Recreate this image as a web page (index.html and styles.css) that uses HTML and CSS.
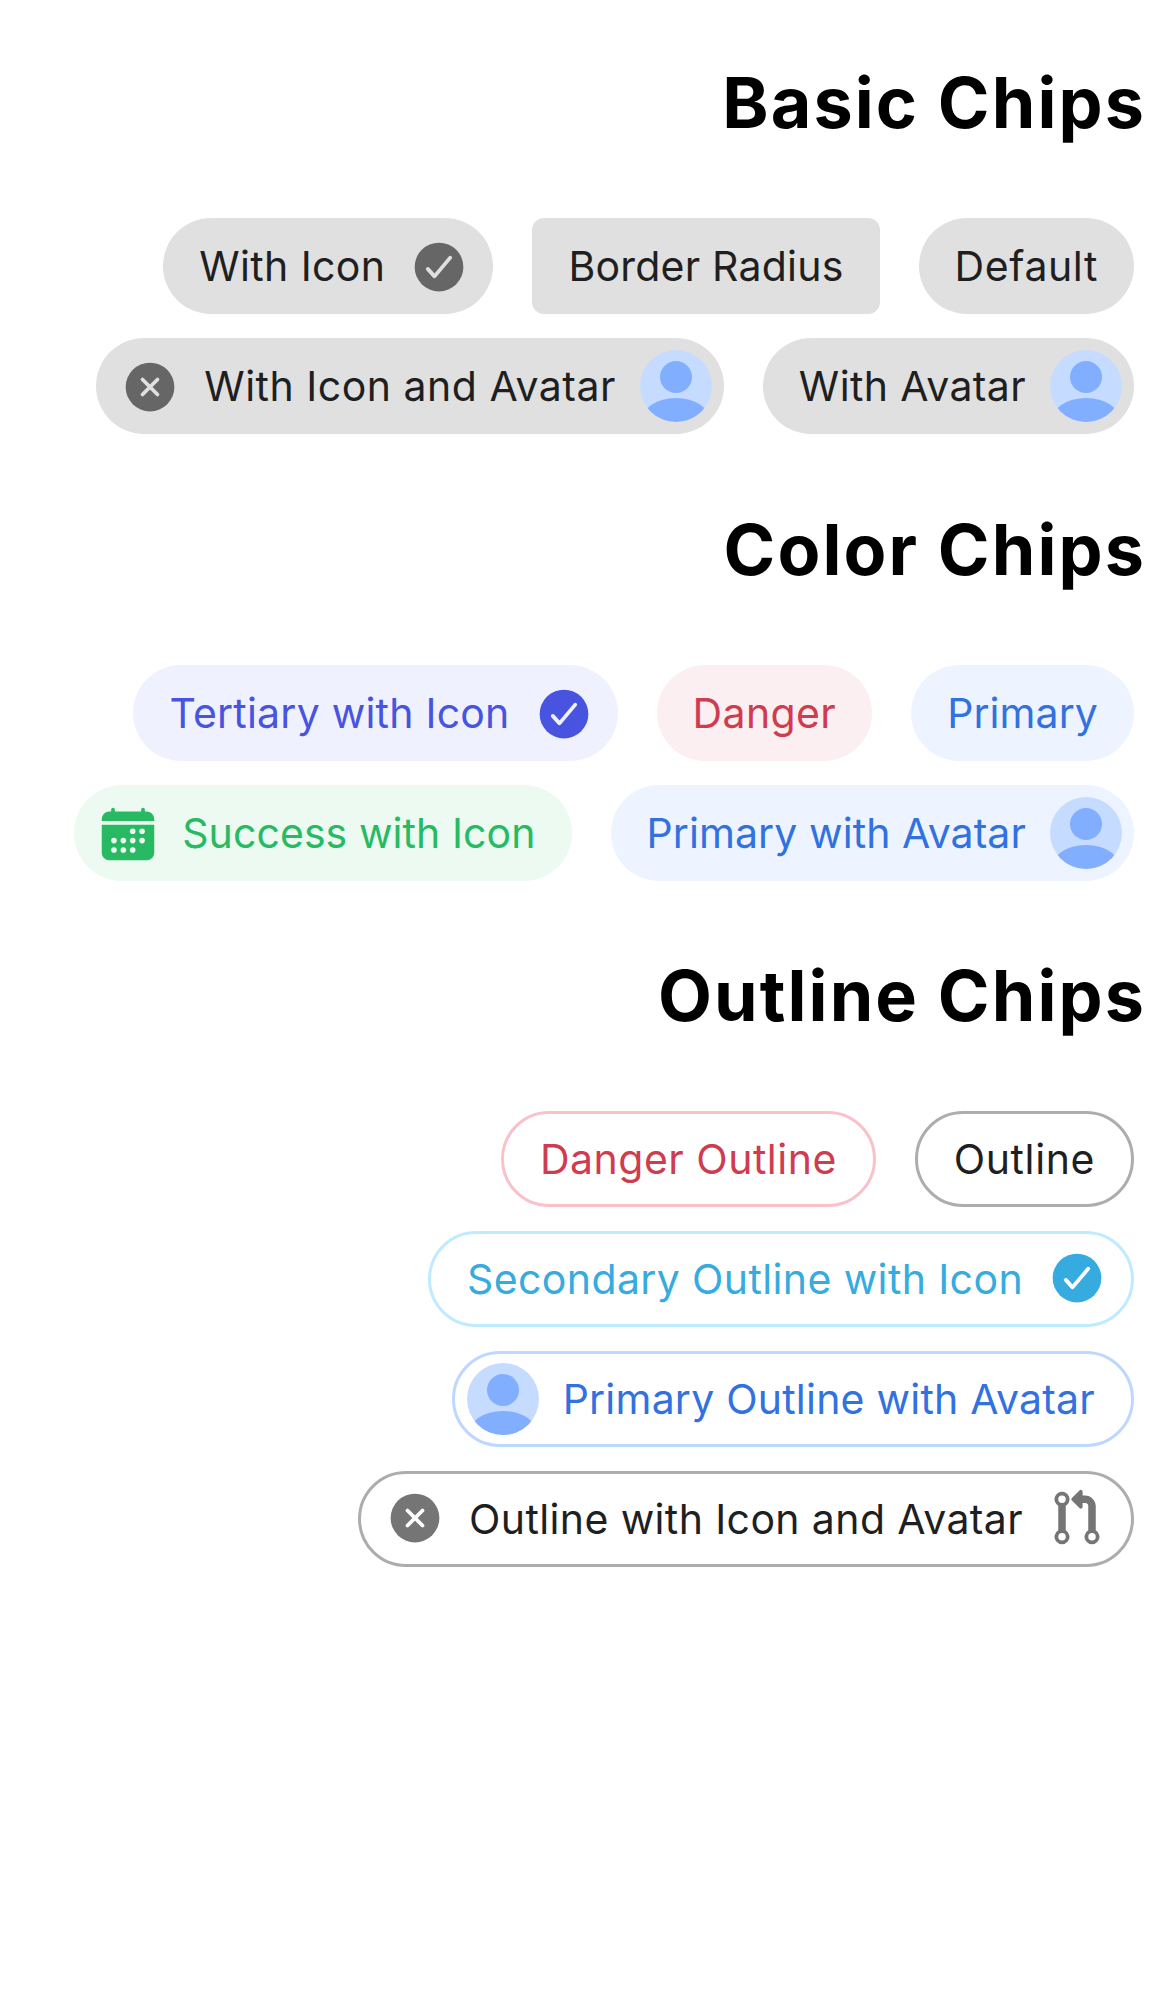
FILE: index.html
```html
<!DOCTYPE html>
<html lang="en" dir="rtl">
<head>
<meta charset="utf-8">
<title>Chips</title>
<link rel="stylesheet" href="styles.css">
</head>
<body>
<svg class="sprite" aria-hidden="true">
  <defs>
    <symbol id="check" viewBox="0 0 512 512">
      <mask id="check-cut"><rect width="512" height="512" fill="#fff"/><path d="M352 176 217.6 336 160 272" fill="none" stroke="#000" stroke-width="32" stroke-linecap="round" stroke-linejoin="round"/></mask>
      <circle cx="256" cy="256" r="208" fill="currentColor" mask="url(#check-cut)"/>
    </symbol>
    <symbol id="close" viewBox="0 0 512 512">
      <mask id="close-cut"><rect width="512" height="512" fill="#fff"/><path d="M320 320 192 192M320 192 192 320" fill="none" stroke="#000" stroke-width="32" stroke-linecap="round"/></mask>
      <circle cx="256" cy="256" r="208" fill="currentColor" mask="url(#close-cut)"/>
    </symbol>
    <symbol id="calendar" viewBox="0 0 512 512">
      <mask id="calendar-cut"><rect width="512" height="512" fill="#fff"/><circle cx="296" cy="232" r="24"/><circle cx="376" cy="232" r="24"/><circle cx="136" cy="312" r="24"/><circle cx="216" cy="312" r="24"/><circle cx="296" cy="312" r="24"/><circle cx="376" cy="312" r="24"/><circle cx="136" cy="392" r="24"/><circle cx="216" cy="392" r="24"/><circle cx="296" cy="392" r="24"/></mask>
      <path fill="currentColor" mask="url(#calendar-cut)" d="M480 128a64 64 0 0 0-64-64h-16V48a16 16 0 0 0-32 0v16H144V48a16 16 0 0 0-32 0v16H96a64 64 0 0 0-64 64v12a4 4 0 0 0 4 4h440a4 4 0 0 0 4-4zM32 416a64 64 0 0 0 64 64h320a64 64 0 0 0 64-64V179a3 3 0 0 0-3-3H35a3 3 0 0 0-3 3z"/>
    </symbol>
    <symbol id="pull-request" viewBox="0 0 512 512">
      <path fill="currentColor" fill-rule="evenodd" d="M192 96a64 64 0 1 0-96 55.39v209.22a64 64 0 1 0 64 0V151.39A64 64 0 0 0 192 96zM128 64a32 32 0 1 1 0 64 32 32 0 0 1 0-64zM128 448a32 32 0 1 1 0-64 32 32 0 0 1 0 64zM416 360.61V156a92.1 92.1 0 0 0-92-92h-20V32a16 16 0 0 0-27.31-11.31l-64 64a16 16 0 0 0 0 22.62l64 64A16 16 0 0 0 304 160v-32h20a28 28 0 0 1 28 28v204.61a64 64 0 1 0 64 0zM384 448a32 32 0 1 1 0-64 32 32 0 0 1 0 64z"/>
    </symbol>
    <symbol id="person" viewBox="0 0 72 72">
      <clipPath id="round"><circle cx="36" cy="36" r="36"/></clipPath>
      <g clip-path="url(#round)"><rect width="72" height="72" fill="#c5dbff"/><circle cx="36" cy="27" r="16" fill="#82aeff"/><ellipse cx="36" cy="72" rx="35" ry="24" fill="#82aeff"/></g>
    </symbol>
  </defs>
</svg>

<main class="page">
  <section class="group">
    <h1 class="title">Basic Chips</h1>
    <div class="row">
      <div class="chip"><span class="label">Default</span></div>
      <div class="chip square"><span class="label snug">Border Radius</span></div>
      <div class="chip"><svg class="icon"><use href="#check"/></svg><span class="label normal">With Icon</span></div>
    </div>
    <div class="row">
      <div class="chip"><svg class="avatar"><use href="#person"/></svg><span class="label normal">With Avatar</span></div>
      <div class="chip"><svg class="avatar"><use href="#person"/></svg><span class="label loose">With Icon and Avatar</span><svg class="icon"><use href="#close"/></svg></div>
    </div>
  </section>

  <section class="group">
    <h1 class="title">Color Chips</h1>
    <div class="row">
      <div class="chip primary"><span class="label tight">Primary</span></div>
      <div class="chip danger"><span class="label normal">Danger</span></div>
      <div class="chip tertiary"><svg class="icon"><use href="#check"/></svg><span class="label snug">Tertiary with Icon</span></div>
    </div>
    <div class="row">
      <div class="chip primary"><svg class="avatar"><use href="#person"/></svg><span class="label tight">Primary with Avatar</span></div>
      <div class="chip success"><span class="label tight">Success with Icon</span><svg class="icon"><use href="#calendar"/></svg></div>
    </div>
  </section>

  <section class="group">
    <h1 class="title">Outline Chips</h1>
    <div class="row">
      <div class="chip outline"><span class="label">Outline</span></div>
      <div class="chip outline danger"><span class="label loose">Danger Outline</span></div>
    </div>
    <div class="row">
      <div class="chip outline secondary"><svg class="icon"><use href="#check"/></svg><span class="label normal">Secondary Outline with Icon</span></div>
    </div>
    <div class="row">
      <div class="chip outline primary"><span class="label snug">Primary Outline with Avatar</span><svg class="avatar"><use href="#person"/></svg></div>
    </div>
    <div class="row">
      <div class="chip outline"><svg class="icon"><use href="#pull-request"/></svg><span class="label normal">Outline with Icon and Avatar</span><svg class="icon"><use href="#close"/></svg></div>
    </div>
  </section>
</main>
</body>
</html>
```
FILE: styles.css
```css
* {
  box-sizing: border-box;
}

body {
  margin: 0;
  background: #fff;
  color: #000;
  font-family: Inter, "Liberation Sans", sans-serif;
}

.sprite {
  position: absolute;
  width: 0;
  height: 0;
}

.page {
  min-height: 1992px;
  padding: 54px 24px 0;
}

.group {
  margin-bottom: 54.6px;
}

.title {
  height: 98px;
  margin: 0 0 54px;
  font-size: 70px;
  font-weight: 700;
  line-height: 98px;
  letter-spacing: 2.1px;
}

.row {
  display: flex;
  gap: 15px;
  height: 120px;
}

.chip {
  display: flex;
  align-items: center;
  height: 96px;
  margin: 12px;
  padding: 0 36px;
  border-radius: 48px;
  background: #e0e0e0;
  color: #1f1f1f;
  font-size: 41px;
  white-space: nowrap;
}

.label {
  line-height: 60px;
  letter-spacing: 0.6px;
}

.label.loose {
  letter-spacing: 0.5px;
}

.label.normal {
  letter-spacing: 0.38px;
}

.label.snug {
  letter-spacing: 0.22px;
}

.label.tight {
  letter-spacing: 0.08px;
}

.square {
  border-radius: 12px;
}

.icon {
  flex: none;
  width: 60px;
  height: 60px;
  margin-top: 2px;
  color: #666;
}

.icon:first-child {
  margin-right: -12px;
  margin-left: 24px;
}

.icon:last-child {
  margin-right: 24px;
  margin-left: -12px;
}

.avatar {
  flex: none;
  width: 72px;
  height: 72px;
}

.avatar:first-child {
  margin-right: -24px;
  margin-left: 24px;
}

.avatar:last-child {
  margin-right: 24px;
  margin-left: -24px;
}

.primary {
  background: #edf4ff;
  color: #3171e0;
}

.danger {
  background: #fceff1;
  color: #cf3c4f;
}

.tertiary {
  background: #f0f1ff;
  color: #4854e0;
}

.success {
  background: #ecfaf2;
  color: #28ba62;
}

.secondary {
  color: #36abe0;
}

.tertiary .icon,
.success .icon {
  color: inherit;
}

.outline {
  border: 3px solid #adadad;
  background: transparent;
}

.outline .icon {
  margin-top: -2px;
  color: #757575;
}

.outline.secondary .icon {
  color: inherit;
}

.outline.danger {
  border-color: #f9c1ca;
}

.outline.secondary {
  border-color: #beebff;
}

.outline.primary {
  border-color: #bed7ff;
}
```
